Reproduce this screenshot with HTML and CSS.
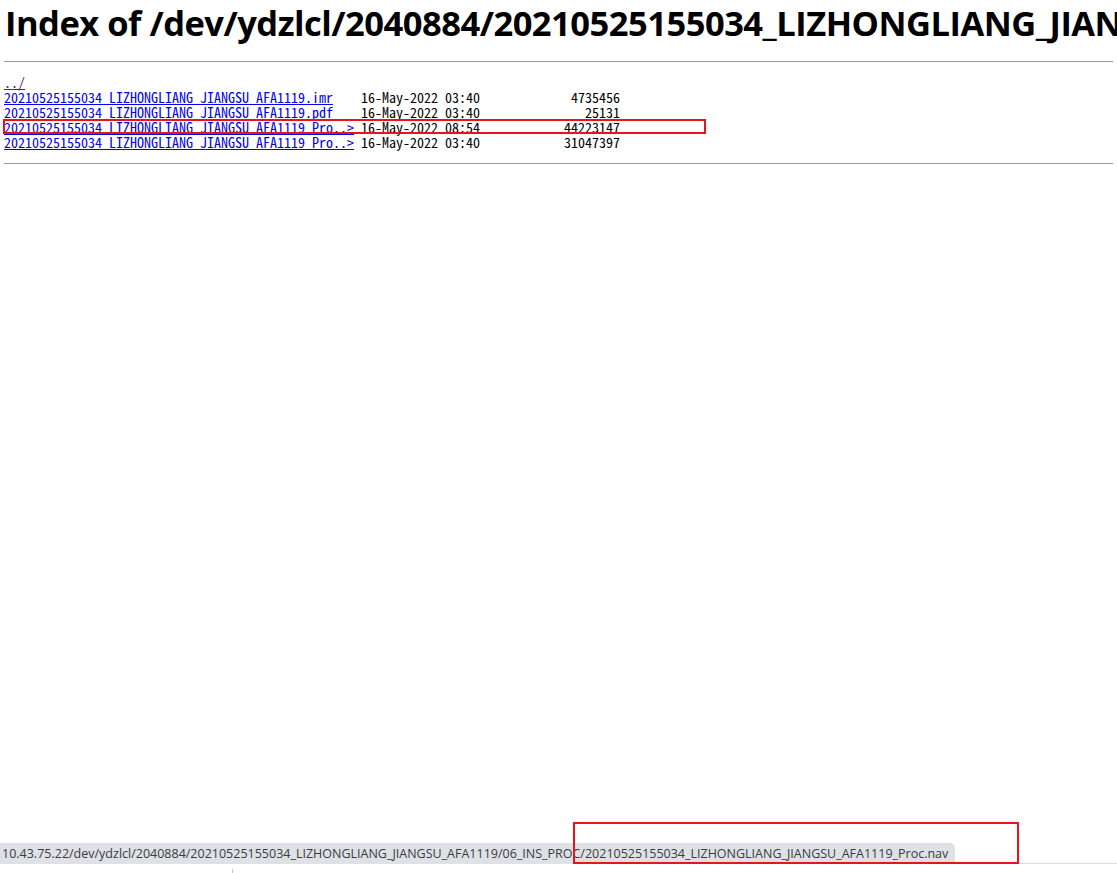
FILE: index.html
```html
<!DOCTYPE html>
<html>
<head>
<meta charset="utf-8">
<title>Index of /dev/ydzlcl/2040884/20210525155034_LIZHONGLIANG_JIANGSU_AFA1119/06_INS_PROC/</title>
<link rel="stylesheet" href="styles.css">
</head>
<body>
<h1 class="title">Index of /dev/ydzlcl/2040884/20210525155034_LIZHONGLIANG_JIANGSU_AFA1119/06_INS_PROC/</h1>
<hr class="rule">
<pre class="listing"><a class="visited" href="#">../</a>
<a href="#">20210525155034_LIZHONGLIANG_JIANGSU_AFA1119.imr</a>    16-May-2022 03:40             4735456
<a href="#">20210525155034_LIZHONGLIANG_JIANGSU_AFA1119.pdf</a>    16-May-2022 03:40               25131
<span class="mark"><a href="#">20210525155034_LIZHONGLIANG_JIANGSU_AFA1119_Pro..&gt;</a> 16-May-2022 08:54            44223147</span>
<a href="#">20210525155034_LIZHONGLIANG_JIANGSU_AFA1119_Pro..&gt;</a> 16-May-2022 03:40            31047397
</pre>
<hr class="rule rule-end">
<div class="bottom-strip"><span class="tick"></span></div>
<div class="status">10.43.75.22/dev/ydzlcl/2040884/20210525155034_LIZHONGLIANG_JIANGSU_AFA1119/06_INS_PROC/20210525155034_LIZHONGLIANG_JIANGSU_AFA1119_Proc.nav</div>
<div class="status-mark"></div>
</body>
</html>
```
FILE: styles.css
```css
html, body {
  margin: 0;
  padding: 0;
  overflow: hidden;
  background: #fff;
}
body {
  padding: 0 4px;
  color: #000;
}
.title {
  margin: 0;
  padding: 0 0 0 1px;
  font-family: "Open Sans", "Liberation Sans", sans-serif;
  font-weight: 700;
  font-size: 34.5px;
  line-height: 45px;
  white-space: nowrap;
  letter-spacing: -0.5px;
}
.rule {
  margin: 16px 0 0 0;
  border: 0;
  border-top: 1px solid #9a9a9a;
  height: 0;
}
.listing {
  margin: 13px 0 0 0;
  font-family: "Noto Sans Mono CJK SC", "Liberation Mono", monospace;
  font-size: 14px;
  line-height: 15px;
  white-space: pre;
}
.listing a {
  color: #0000ee;
}
.listing a.visited {
  color: #551a8b;
}
.mark {
  outline: 2px solid #e8141c;
  outline-offset: -1px;
  display: inline-block;
  width: 701px;
  height: 13px;
}
.rule-end {
  margin-top: 13px;
}
.bottom-strip {
  position: fixed;
  left: 0;
  right: 0;
  bottom: 0;
  height: 9px;
  border-top: 1px solid #dcdcdc;
}
.tick {
  position: absolute;
  left: 232px;
  top: 5px;
  width: 1px;
  height: 4px;
  background: #c8c8c8;
}
.status {
  position: fixed;
  left: 0;
  bottom: 9px;
  height: 21px;
  width: 955px;
  padding-left: 2px;
  box-sizing: border-box;
  background: #dee1e6;
  border-top-right-radius: 5px;
  font-family: "Open Sans", "Liberation Sans", sans-serif;
  font-size: 12.5px;
  line-height: 22px;
  color: #3c3c3c;
  white-space: nowrap;
  overflow: hidden;
}
.status-mark {
  position: fixed;
  left: 573px;
  top: 822px;
  width: 446px;
  height: 42px;
  box-sizing: border-box;
  border: 2px solid #e8141c;
}
```
